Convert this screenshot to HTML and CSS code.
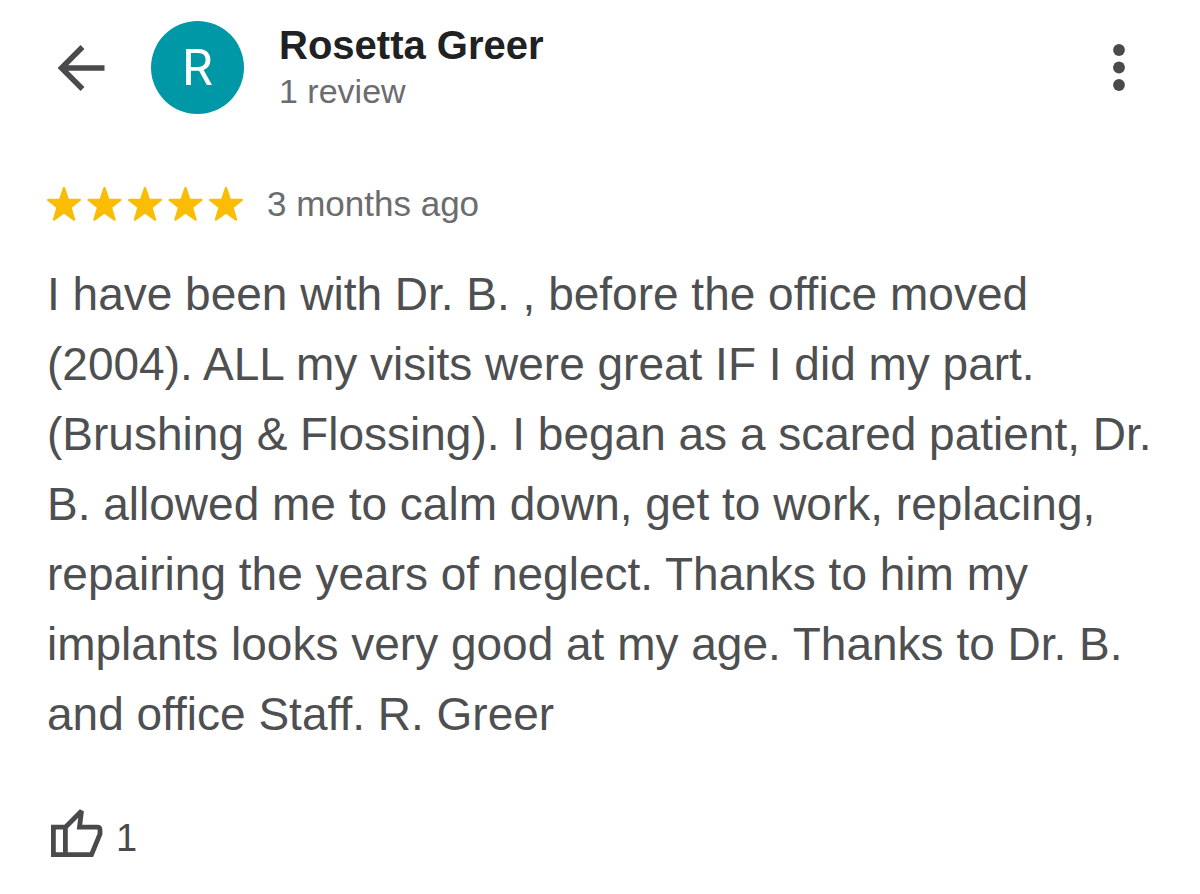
FILE: index.html
```html
<!DOCTYPE html>
<html lang="en">
<head>
<meta charset="utf-8">
<meta name="viewport" content="width=device-width, initial-scale=1">
<title>Rosetta Greer – review</title>
<link rel="stylesheet" href="styles.css">
</head>
<body>
<main class="review">
  <header class="header">
    <button class="icon-button" type="button" aria-label="Back">
      <svg class="back-icon" viewBox="0 0 48 48" aria-hidden="true"><path d="M47.500 24H6M25.500 3L4.500 24L25.500 45" fill="none" stroke="currentColor" stroke-width="5.500"/></svg>
    </button>
    <div class="avatar">R</div>
    <div class="author">
      <h1 class="name">Rosetta Greer</h1>
      <p class="count">1 review</p>
    </div>
    <button class="icon-button" type="button" aria-label="More options">
      <svg class="more-icon" viewBox="0 0 12 48" aria-hidden="true"><g fill="currentColor"><circle cx="6" cy="6" r="5.900"/><circle cx="6" cy="23.500" r="5.900"/><circle cx="6" cy="41" r="5.900"/></g></svg>
    </button>
  </header>
  <div class="rating">
    <svg class="stars" viewBox="0 0 198 34" role="img" aria-label="5 out of 5 stars">
      <defs><path id="star" d="M17 1.200L20.900 12.900H32.800L23.400 20.300L27 32.500L17 25.200L7 32.500L10.600 20.300L1.200 12.900H13.100Z"/></defs>
      <g fill="#fbbc04" stroke="#fbbc04" stroke-width="2.400" stroke-linejoin="round"><use href="#star"/><use href="#star" x="40.500"/><use href="#star" x="81"/><use href="#star" x="121.500"/><use href="#star" x="162"/></g>
    </svg>
    <span class="date">3 months ago</span>
  </div>
  <p class="text">I have been with Dr. B. , before the office moved (2004). ALL my visits were great IF I did my part. (Brushing &amp; Flossing). I began as a scared patient, Dr. B. allowed me to calm down, get to work, replacing, repairing the years of neglect. Thanks to him my implants looks very good at my age. Thanks to Dr. B. and office Staff. R. Greer</p>
  <button class="like" type="button" aria-label="Like, 1">
    <svg class="like-icon" viewBox="0 0 52 48" aria-hidden="true"><path d="M2.400 18.200H14.400V45.600H2.400ZM14.400 18.200L30.500 2L28.500 18.200H46.200Q49 18.200 49 21V25L40.500 45.600H14.400" fill="none" stroke="currentColor" stroke-width="4.800" stroke-linejoin="miter" stroke-miterlimit="2"/></svg>
    <span>1</span>
  </button>
</main>
</body>
</html>
```
FILE: styles.css
```css
* { box-sizing: border-box; }
body { margin: 0; background: #fff; color: #4e4f51; font-family: "Liberation Sans", Arial, sans-serif; }
h1, p { margin: 0; }
button { border: 0; padding: 0; background: none; color: inherit; font: inherit; }
svg { display: block; }
.review { padding: 21px 44px 32px 47px; }
.header { display: flex; align-items: center; padding: 0 31px 0 10px; }
.icon-button { color: #4a4a4c; }
.back-icon { width: 48px; height: 48px; }
.more-icon { width: 12px; height: 48px; }
.avatar { display: grid; place-items: center; width: 93px; height: 93px; margin-left: 46px; border-radius: 50%; background: #0097a7; color: #fff; font: 400 50px Roboto, sans-serif; }
.author { flex: 1; margin-left: 35px; }
.name { color: #202122; font-size: 40px; line-height: 46px; }
.count { color: #6b6c6e; font-size: 34px; line-height: 46px; }
.rating { display: flex; align-items: center; gap: 22px; margin-top: 68px; color: #6b6c6e; font-size: 35px; line-height: 44px; }
.stars { width: 198px; height: 34px; }
.text { margin-top: 33px; font-size: 46px; line-height: 70px; }
.like { display: flex; align-items: flex-end; gap: 13px; margin: 60px 0 0 4px; font-size: 38px; line-height: 38px; color: #4a4a4c; }
.like-icon { width: 52px; height: 48px; }
```
